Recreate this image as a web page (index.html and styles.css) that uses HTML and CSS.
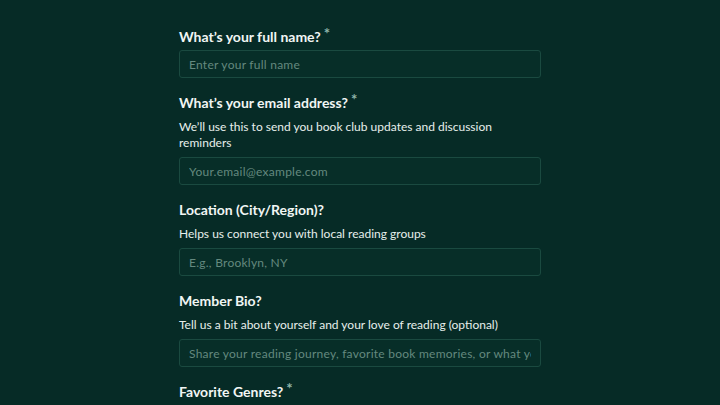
FILE: index.html
```html
<!DOCTYPE html>
<html lang="en">
<head>
<meta charset="utf-8">
<title>Book Club Sign-up</title>
<link rel="stylesheet" href="styles.css">
</head>
<body>
<main class="form">
  <div class="field">
    <label class="label" for="name">What’s your full name?<span class="req">*</span></label>
    <input class="input" id="name" type="text" placeholder="Enter your full name">
  </div>
  <div class="field">
    <label class="label" for="email">What’s your email address?<span class="req">*</span></label>
    <p class="desc">We’ll use this to send you book club updates and discussion reminders</p>
    <input class="input" id="email" type="email" placeholder="Your.email@example.com">
  </div>
  <div class="field">
    <label class="label" for="loc">Location (City/Region)?</label>
    <p class="desc">Helps us connect you with local reading groups</p>
    <input class="input" id="loc" type="text" placeholder="E.g., Brooklyn, NY">
  </div>
  <div class="field">
    <label class="label" for="bio">Member Bio?</label>
    <p class="desc">Tell us a bit about yourself and your love of reading (optional)</p>
    <input class="input" id="bio" type="text" placeholder="Share your reading journey, favorite book memories, or what you hope to get from the club">
  </div>
  <div class="field">
    <label class="label" for="genres">Favorite Genres?<span class="req">*</span></label>
  </div>
</main>
</body>
</html>
```

FILE: styles.css
```css
html, body {
  margin: 0;
  padding: 0;
  background: #062b26;
  height: 100%;
  overflow: hidden;
}
body {
  font-family: Lato, "Noto Sans", sans-serif;
  color: #eef4f2;
}
.form {
  width: 362px;
  margin: 0 auto;
  padding-top: 27px;
  display: flex;
  flex-direction: column;
  gap: 15px;
}
.field {
  display: flex;
  flex-direction: column;
}
.label {
  font-size: 14px;
  font-weight: 700;
  line-height: 20px;
  margin-bottom: 3px;
  color: #f1f6f4;
}
.req {
  font-size: 15px;
  font-weight: 700;
  line-height: 1;
  color: #8fb5aa;
  vertical-align: top;
  position: relative;
  top: -1px;
  margin-left: 3px;
}
.desc {
  margin: 3px 0 6px;
  font-size: 12px;
  line-height: 16px;
  color: #e6efec;
}
.input {
  box-sizing: border-box;
  height: 28px;
  width: 100%;
  margin: 0;
  padding: 0 9px;
  background: #072e28;
  border: 1px solid #1a4a40;
  border-radius: 3px;
  font-family: Lato, "Noto Sans", sans-serif;
  font-size: 12px;
  letter-spacing: 0.25px;
  color: #eef4f2;
  outline: none;
}
.input::placeholder {
  color: #64897f;
  opacity: 1;
}
```
